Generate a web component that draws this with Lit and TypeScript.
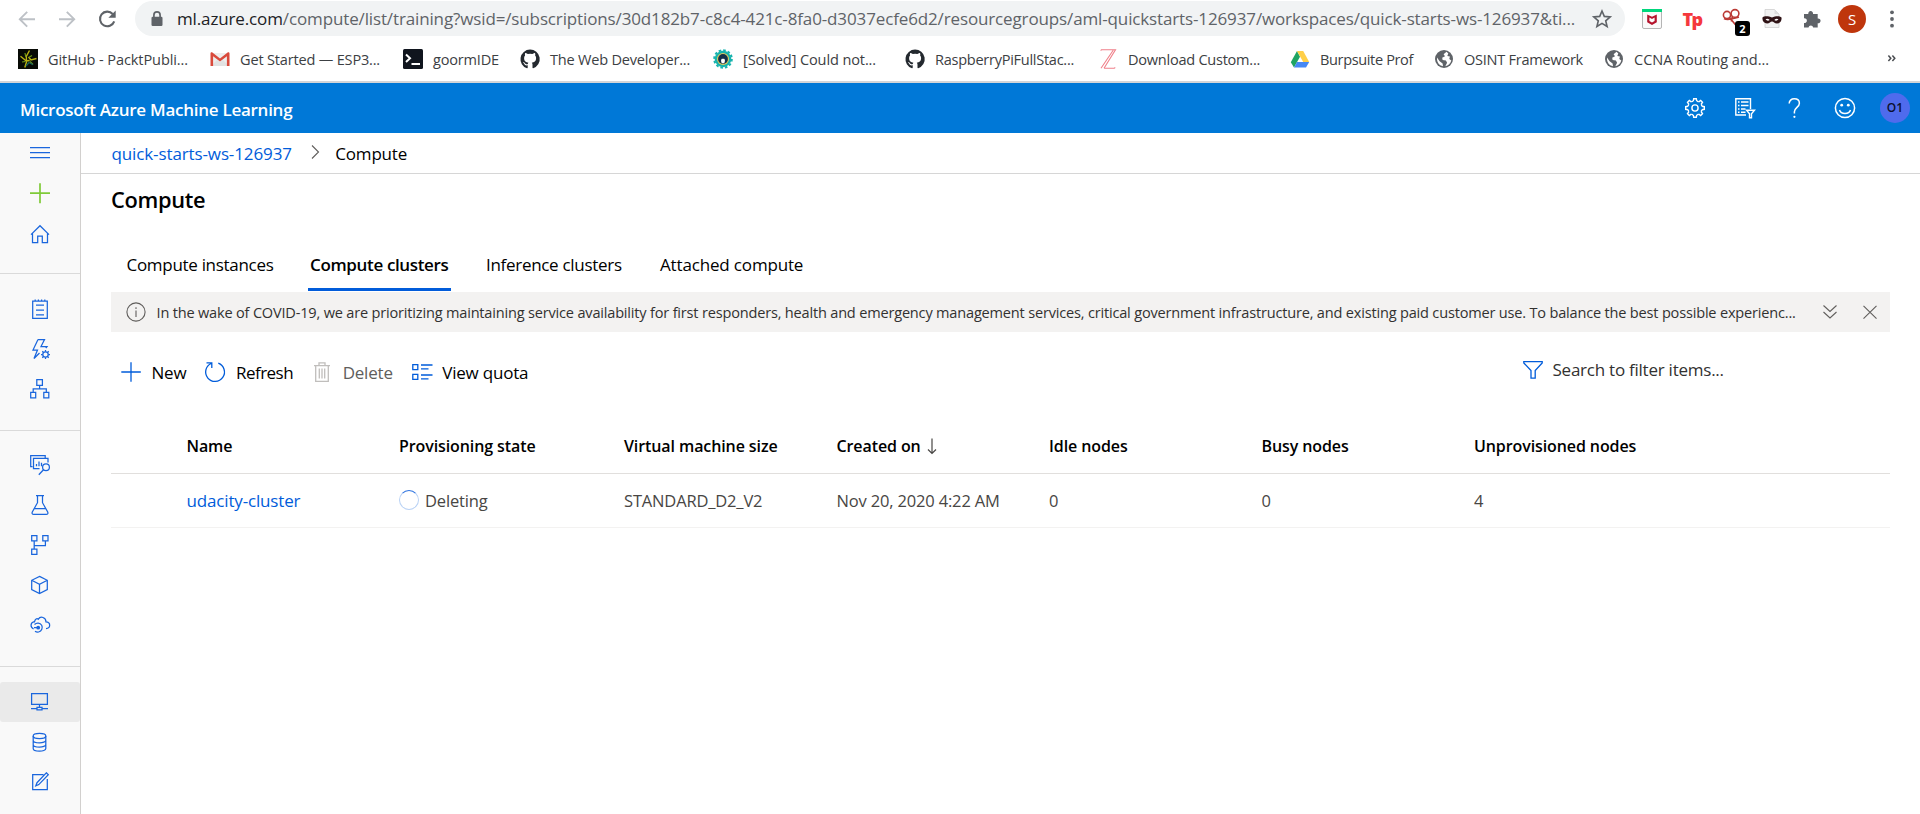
import { LitElement, html, svg, css, nothing } from 'lit';
import { customElement } from 'lit/decorators.js';
import { classMap } from 'lit/directives/class-map.js';
import { styleMap } from 'lit/directives/style-map.js';

type Bookmark = { icon: string; label: string; width: number; tracking: number };

const octocat = svg`<path fill="#24292f" d="M10 .6a9.600 9.600 0 0 0-3 18.700c.5.1.7-.2.7-.5v-2.500c-2.400.4-3-.6-3.200-1.100-.1-.3-.6-1.100-1-1.300-.3-.2-.8-.7 0-.7s1.300.7 1.500 1c.9 1.500 2.300 1.100 2.800.8.1-.6.4-1 .6-1.300-2.100-.2-4.300-1-4.300-4.600 0-1 .4-1.900 1-2.500-.1-.3-.4-1.200.1-2.500 0 0 .8-.3 2.600 1a9 9 0 0 1 4.600 0c1.800-1.200 2.600-1 2.600-1 .5 1.300.2 2.200.1 2.500.6.6 1 1.500 1 2.500 0 3.600-2.200 4.400-4.300 4.600.4.3.7.9.7 1.700v3.400c0 .3.200.6.7.5A9.600 9.600 0 0 0 10 .6z"/>`;

const globe = svg`<circle cx="10" cy="10" r="9" fill="#5f6368"/>
  <path fill="#fff" d="M12.500 2.800 9.600 5.200 11 7.200 8.200 8.800 8.600 11l3.300.6 1.200 2.200-1.800 3.400c3-.6 5.400-2.600 6-5.600l-2-1.600.6-2.600-2.600-.4 1-2.400zM3 8.600c-.4 3 .8 6 3.200 7.600L9 17.300l-.4-2.900-3-2.200z"/>`;

const favicons: Record<string, unknown> = {
  hub: svg`<rect width="20" height="20" fill="#080b06"/>
    <path fill="none" stroke="#b9b312" stroke-width="1.400" d="M11.500 1.500 8.300 7.500l.2 4M2.500 7.200 8.300 12l3.400-.5M6.800 18.500l1.800-5.800M18.500 9.500l-5.500 1.500-2.500-3"/>
    <path fill="none" stroke="#6d9a18" stroke-width="1.200" d="m7 4 .8 4M4 13l3.500-.5M15 15.500l-3-3M14 6.500 11 8.200"/>
    <path fill="none" stroke="#17605a" stroke-width="1.300" d="m8 17 3-3.500 4 2.200"/>`,
  gmail: svg`<path fill="#eeeeee" d="M1 4h18v13H1z"/><path fill="#dadada" d="m1 17 6-6 3 2.500L13 11l6 6z" opacity=".6"/>
    <path fill="#d94a3c" d="M.5 4.500C.5 3.500 1.600 3 2.400 3.600L10 9.500l7.600-5.900c.8-.6 1.900-.1 1.900.9V17h-2.600V7.200L10 12.500 3.100 7.200V17H.5z"/>`,
  goorm: svg`<rect width="20" height="20" rx="1.500" fill="#10151e"/>
    <path fill="none" stroke="#fff" stroke-width="2" d="m3 5.500 4 3.700-4 3.700M8.500 15H17"/>`,
  octocat,
  penguin: svg`<circle cx="10" cy="10" r="8.300" fill="#17b3ae"/>
    <circle cx="10" cy="10" r="8.800" fill="none" stroke="#17b3ae" stroke-width="2" stroke-dasharray="2.600 2"/>
    <circle cx="10" cy="10" r="6" fill="#e3c95a"/><circle cx="10" cy="10" r="4.900" fill="#14304a"/>
    <ellipse cx="10" cy="11.800" rx="2" ry="2.600" fill="#fff"/><circle cx="10" cy="8" r="1.800" fill="#14304a"/>`,
  zed: svg`<path fill="none" stroke="#f0808a" stroke-width="1.100" d="M3 .8h14.500L6 19.200M3 .8v1M15.200 1.200 3 19.200M6 19.200h10.800M16.800 19.200v-1"/>`,
  drive: svg`<path fill="#1fa463" d="M7 2 .8 13.200 4 18.500l6-10.800z"/><path fill="#ffcf48" d="M7 2h6.200l6 11h-6z"/>
    <path fill="#4688f4" d="M7 13h12.200L16 18.500H4z"/>`,
  globe,
};

const bookmarks: Bookmark[] = [
  { icon: 'hub', label: 'GitHub - PacktPubli...', width: 192, tracking: -0.007 },
  { icon: 'gmail', label: 'Get Started — ESP3...', width: 193, tracking: -0.0126 },
  { icon: 'goorm', label: 'goormIDE', width: 117, tracking: -0.013 },
  { icon: 'octocat', label: 'The Web Developer...', width: 193, tracking: -0.0145 },
  { icon: 'penguin', label: '[Solved] Could not...', width: 192, tracking: -0.0083 },
  { icon: 'octocat', label: 'RaspberryPiFullStac...', width: 193, tracking: -0.0188 },
  { icon: 'zed', label: 'Download Custom...', width: 192, tracking: -0.0174 },
  { icon: 'drive', label: 'Burpsuite Prof', width: 144, tracking: -0.0253 },
  { icon: 'globe', label: 'OSINT Framework', width: 170, tracking: -0.0178 },
  { icon: 'globe', label: 'CCNA Routing and...', width: 170, tracking: -0.0026 },
];

const glyph = (body: unknown, size = 20) =>
  html`<svg width=${size} height=${size} viewBox="0 0 20 20">${body}</svg>`;

@customElement('browser-chrome')
class BrowserChrome extends LitElement {
  static styles = css`
    :host { display: block; height: 83px; box-sizing: border-box; border-bottom: 2px solid #d3d5d8; background: #fff; font-family: 'Open Sans', sans-serif; }
    svg { display: block; flex: none; overflow: visible; }
    .toolbar { display: flex; align-items: center; height: 35px; padding: 1px 18px 1px 17px; }
    .nav { display: flex; gap: 20px; width: 118px; }
    .omnibox { display: flex; align-items: center; width: 1490px; height: 35px; box-sizing: border-box; padding: 0 13px 0 12px; border-radius: 17.5px; background: #f1f3f4; }
    .url { flex: 1; margin-left: 10px; white-space: nowrap; font-size: 17px; letter-spacing: -0.0078em; color: #5f6368; }
    .domain { color: #202124; }
    .extensions { display: flex; align-items: center; gap: 20px; flex: 1; padding-left: 17px; }
    .ext { display: flex; width: 20px; justify-content: center; position: relative; }
    .tp { font-weight: 800; font-size: 18px; line-height: 20px; letter-spacing: -0.09em; color: #f5383c; }
    .count { position: absolute; left: 13px; top: 12px; width: 15px; height: 15px; border-radius: 3px; background: #000; color: #fff; font-size: 11px; line-height: 15px; font-weight: 700; text-align: center; }
    .profile { flex: none; width: 28px; height: 28px; margin: 0 -4px; border-radius: 50%; background: #bf360c; color: #fff; text-align: center; font-size: 15px; line-height: 28px; }
    .bookmarks { display: flex; align-items: center; height: 44px; padding-left: 18px; }
    .bookmark { display: flex; align-items: center; gap: 10px; flex: none; font-size: 14.55px; color: #3c4043; white-space: nowrap; }
    .more { margin-left: auto; margin-right: 18px; }
  `;

  render() {
    return html`
      <div class="toolbar">
        <div class="nav">
          ${glyph(svg`<path fill="none" stroke="#bdc1c6" stroke-width="1.900" d="M18 10.200H3M10.200 2.800 2.800 10.200l7.400 7.400"/>`)}
          ${glyph(svg`<path fill="none" stroke="#bdc1c6" stroke-width="1.900" d="M2 10.200h15M9.800 2.800l7.400 7.400-7.400 7.400"/>`)}
          ${glyph(svg`<path fill="none" stroke="#5f6368" stroke-width="2.100" d="M17.200 12.300A7.300 7.300 0 1 1 15.700 5"/><path fill="#5f6368" d="M18.700 1.500v7.300h-7.300z"/>`)}
        </div>
        <div class="omnibox">
          ${glyph(svg`<rect x="4.500" y="7.700" width="11" height="9.300" rx="1.200" fill="#5f6368"/><path fill="none" stroke="#5f6368" stroke-width="1.700" d="M6.900 8V6a3.100 3.100 0 0 1 6.200 0v2"/>`)}
          <span class="url"><span class="domain">ml.azure.com</span>/compute/list/training?wsid=/subscriptions/30d182b7-c8c4-421c-8fa0-d3037ecfe6d2/resourcegroups/aml-quickstarts-126937/workspaces/quick-starts-ws-126937&amp;ti...</span>
          ${glyph(svg`<path fill="none" stroke="#5f6368" stroke-width="1.600" d="m10 2 2.300 5.400 5.900.5-4.500 3.900 1.400 5.700L10 14.400l-5.100 3.100 1.400-5.700-4.500-3.900 5.900-.5z"/>`)}
        </div>
        <div class="extensions">
          <span class="ext">${glyph(svg`<rect x=".5" y=".5" width="19" height="19" rx="1.500" fill="#fafafa" stroke="#b5b5b5"/><path fill="#00d67c" d="M0 0h20v3H0z"/><path fill="#b5122b" d="M5.200 5.400 10 7.700l4.800-2.300v7.800L10 15.900l-4.800-2.700zM7.400 8.600v3.300l2.600 1.500 2.600-1.500V8.600L10 9.900z"/>`)}</span>
          <span class="ext tp">Tp</span>
          <span class="ext">${glyph(svg`<g fill="none" stroke="#bb3a35" stroke-width="1.600"><circle cx="5" cy="6" r="3.600"/><circle cx="13" cy="4.500" r="3.900"/><path d="m7.500 8.500 7 8.500M10.300 7.500l-1 5M2 9.500c4 2.500 9 0 15-1.500"/></g>`)}<span class="count">2</span></span>
          <span class="ext">${glyph(svg`<path fill="#f1f1f1" stroke="#cfcfcf" stroke-width=".8" d="M3 .5h9.500L17 5v13.500H3z"/><path fill="#ddd" d="M12.500.5 17 5h-4.500z"/><path fill="#2f1215" d="M.5 8.500C3 6.500 7 7.500 10 8.500c3-1 7-2 9.500 0 .5 3.500-1.500 6-4.500 6-2.500 0-3.500-2-5-2s-2.500 2-5 2c-3 0-5-2.500-4.500-6z"/><path fill="#fff" d="M3.500 10.300q2.200-1.200 4.200.8-2.300 1.500-4.200-.8zM16.500 10.300q-2.200-1.200-4.200.8 2.300 1.500 4.200-.8z"/>`)}</span>
          <span class="ext">${glyph(svg`<path fill="#5f6368" d="M2 5h4.300a2.400 2.400 0 1 1 4.700 0h4.700v4.500a2.400 2.400 0 1 1 0 4.700v4.300h-4.500a2.400 2.400 0 0 0-4.700 0H2V14a2.400 2.400 0 1 0 0-4.700z"/>`)}</span>
          <span class="profile">S</span>
          <span class="ext">${glyph(svg`<g fill="#5f6368"><circle cx="10" cy="3.300" r="1.900"/><circle cx="10" cy="10" r="1.900"/><circle cx="10" cy="16.700" r="1.900"/></g>`)}</span>
        </div>
      </div>
      <div class="bookmarks">
        ${bookmarks.map(b => html`
          <span class="bookmark" style=${styleMap({ width: `${b.width}px`, letterSpacing: `${b.tracking}em` })}>${glyph(favicons[b.icon])}${b.label}</span>`)}
        <span class="more">${glyph(svg`<path fill="none" stroke="#4a4d51" stroke-width="1.900" d="m3 5.500 3 3.500-3 3.500M8 5.500 11 9l-3 3.500"/>`, 16)}</span>
      </div>`;
  }
}

@customElement('studio-header')
class StudioHeader extends LitElement {
  static styles = css`
    :host { display: flex; align-items: center; justify-content: space-between; height: 50px; box-sizing: border-box; padding: 0 10px 0 20px; background: #0078d7; color: #fff; font-family: 'Open Sans', sans-serif; }
    .title { padding-top: 2px; font-size: 17px; font-weight: 600; letter-spacing: -0.0155em; white-space: nowrap; }
    .actions { display: flex; align-items: center; gap: 30px; }
    svg { display: block; overflow: visible; }
    .avatar { width: 30px; height: 30px; margin-left: -5px; border-radius: 50%; background: #4f6bed; color: #0b1030; font-size: 12px; font-weight: 600; line-height: 30px; text-align: center; }
  `;

  render() {
    const teeth = Array.from({ length: 8 }, (_, i) => svg`<path d="M8.300 3 8.700.7h2.600l.4 2.300" transform="rotate(${i * 45} 10 10)"/>`);
    const arcs = Array.from({ length: 8 }, (_, i) => svg`<path d="M11.700 3q1 .2 2 1" transform="rotate(${i * 45} 10 10)"/>`);
    return html`
      <span class="title">Microsoft Azure Machine Learning</span>
      <div class="actions">
        ${glyph(svg`<g fill="none" stroke="#fff" stroke-width="1.400">${teeth}${arcs}<circle cx="10" cy="10" r="3.100"/></g>`)}
        ${glyph(svg`<g fill="none" stroke="#fff" stroke-width="1.400"><path d="M11 17H.8V.7h14.700V11"/><path d="M3 4h1.500M6 4h7.500M3 7.500h1.500M6 7.500h7.500M3 11h1.500M6 11h4.500M3 14.200h1.500M6 14.200h4.500"/><path d="M11.500 12.200h8l-3 3.600v3.900h-2v-3.900z"/></g>`)}
        ${glyph(svg`<path fill="none" stroke="#fff" stroke-width="1.500" d="M4.200 5.600C4.200 2.600 6.300.8 9.300.8s5.100 1.800 5.100 4.500c0 4-5 4.300-5 8.500v1.700"/><circle cx="9.400" cy="18.800" r="1.100" fill="#fff"/>`)}
        ${glyph(svg`<g fill="none" stroke="#fff" stroke-width="1.500"><circle cx="10" cy="10" r="9.600"/><path d="M4.500 12c1.500 4.500 9.500 4.500 11 0"/></g><circle cx="6.700" cy="7.200" r="1.400" fill="#fff"/><circle cx="13.300" cy="7.200" r="1.400" fill="#fff"/>`)}
        <span class="avatar">O1</span>
      </div>`;
  }
}

const gearSmall = svg`<circle cx="15.500" cy="15.500" r="2.700"/><path d="M15.500 11v1.700M15.500 18.300V20M11 15.500h1.700M18.300 15.500H20M12.300 12.300l1.200 1.200M17.500 17.500l1.200 1.200M18.700 12.300l-1.200 1.200M13.500 17.500l-1.200 1.200"/>`;

const railIcons: Record<string, unknown> = {
  menu: svg`<path d="M0 4.500h20M0 9.500h20M0 14.500h20"/>`,
  add: svg`<path stroke="#7fca38" stroke-width="1.700" d="M0 10.200h20M10 .2v20"/>`,
  home: svg`<path d="M1 10.600 10 1.700l9 8.900M2.500 9.300v9.200h5.200v-6.300h4.600v6.300h5.200V9.300"/>`,
  notebook: svg`<path d="M2.700 2h14.600v17.400H2.700zM5.200.5V2M8.400.5V2M11.600.5V2M14.800.5V2M6 6.200h8M6 11h8M6 15.800h8"/>`,
  automl: svg`<path d="M8 .6h6.500L11 7.500h6L15.800 9M8 .6 3 11h4.500L4 19.500 9.500 14"/>${gearSmall}`,
  designer: svg`<path d="M6.800.7h5.600v5.600H6.800zM.7 13.300h5v5.600h-5zM13.800 13.300h5v5.600h-5zM9.600 6.300v3.500M3.200 13.300V9.800h13.100v3.500"/>`,
  monitor: svg`<path d="M2.500 11.500H.7V.7h14.500v2M9.500 13.700H3.500V3.400H18v4M6.500 11.200V8.900M9 11.200V6.500M11.500 11.200V7.800"/><circle cx="16" cy="12.300" r="3.400"/><path d="m13.500 14.800-4.700 4.900"/>`,
  flask: svg`<path d="M6 .7h8M7.500.7v7L2.300 17q-.9 2.300 1.500 2.300h12.400q2.400 0 1.500-2.300L12.500 7.700v-7M4.300 13.700h11.400"/>`,
  pipeline: svg`<path d="M1.700.7h5.200v5.200H1.700zM12.800.7H18v5.200h-5.200zM1.700 14.200h5.200v5.200H1.700zM4.200 5.900v8.300M15.400 5.900v4.600H4.200"/>`,
  model: svg`<path d="m9.500 1.400 7.800 3.900v9.300l-7.800 4-7.800-4V5.300zM1.700 5.300l7.800 4 7.800-4M9.500 9.300v9.300"/>`,
  endpoint: svg`<path d="M3.600 13.800A3.700 3.700 0 0 1 3.500 6.800h1C5 3.800 7 3 8.300 4.200c2.300-3.600 7.700-1.800 7.700 2.700 5 .3 4.800 6.600 0 6.600M4.500 9.500c2-2 5.500-2 7.200.8 1.300 2.600 0 6-3 6.700-1.500.3-2.700 0-3.700-.7M4 12.700h3"/><circle cx="8.200" cy="12.700" r="1.900" fill="#1a66dd" stroke="none"/>`,
  compute: svg`<path d="M1.600 1.700h15.800v10.600H1.600zM9.500 12.300v3M7 15.300h5v2.500H7zM1 16.600h6M12 16.600h6"/>`,
  datastore: svg`<ellipse cx="9.500" cy="4" rx="6.300" ry="2.600"/><path d="M3.200 4v12.500c0 3.500 12.600 3.500 12.600 0V4M3.200 8.200c0 3.500 12.600 3.500 12.600 0M3.200 12.400c0 3.500 12.600 3.500 12.600 0"/>`,
  labeling: svg`<path d="M13.500 2.500H2.700v15h14.600V7M16.300.8l2 2-9.500 9.800-3 1.300 1.200-3.200z"/>`,
};

const railGroups: { name: string; items: string[] }[] = [
  { name: 'first', items: ['menu', 'add', 'home'] },
  { name: 'author', items: ['notebook', 'automl', 'designer'] },
  { name: 'assets', items: ['monitor', 'flask', 'pipeline', 'model', 'endpoint'] },
  { name: 'manage', items: ['compute', 'datastore', 'labeling'] },
];

@customElement('nav-rail')
class NavRail extends LitElement {
  static styles = css`
    :host { display: block; width: 81px; box-sizing: border-box; flex: none; border-right: 1px solid #d2d0ce; background: #f9f9f9; }
    .group { box-sizing: border-box; border-bottom: 1px solid #dadada; }
    .first { height: 141px; }
    .first .item { height: 40.6px; }
    .author { height: 157px; padding-top: 15px; }
    .assets { height: 236px; padding-top: 14.5px; }
    .manage { padding-top: 15px; border: 0; }
    .item { display: flex; align-items: center; justify-content: center; height: 40px; padding-bottom: 1px; box-sizing: border-box; border-radius: 3px; }
    .active { background: #eaeaea; }
    svg { display: block; overflow: visible; fill: none; stroke: #1a66dd; stroke-width: 1.25; }
  `;

  render() {
    return railGroups.map(g => html`
      <div class="group ${g.name}">
        ${g.items.map(i => html`<div class=${classMap({ item: true, active: i === 'compute' })}>${glyph(railIcons[i])}</div>`)}
      </div>`);
  }
}

const columns = ['', 'Name', 'Provisioning state', 'Virtual machine size', 'Created on', 'Idle nodes', 'Busy nodes', 'Unprovisioned nodes'];
const tabs = ['Compute instances', 'Compute clusters', 'Inference clusters', 'Attached compute'];

@customElement('compute-page')
class ComputePage extends LitElement {
  static styles = css`
    :host { display: block; flex: 1; min-width: 0; background: #fff; font-family: 'Open Sans', sans-serif; font-size: 17px; letter-spacing: -0.012em; color: #000; }
    svg { display: block; flex: none; overflow: visible; fill: none; stroke: #015cda; stroke-width: 1.3; }
    .crumbs { display: flex; align-items: center; height: 40px; padding-left: 30.5px; border-bottom: 1px solid #d6d6d6; }
    .crumbs svg { margin: 0 10.5px 3px 13px; stroke: #605e5c; stroke-width: 1.1; }
    .link { color: #015cda; }
    .crumbs .link { letter-spacing: -0.0069em; }
    .body { padding: 0 30px; }
    h1 { margin: 0; font-size: 21.8px; line-height: 51px; font-weight: 600; letter-spacing: -0.0149em; }
    .tabs { display: grid; grid-template-columns: 183.5px 176px 174px auto; height: 50px; margin: 16px 0 0 13px; }
    .tab { justify-self: start; box-sizing: border-box; height: 50px; padding: 0 2.5px; border-bottom: 3px solid transparent; line-height: 47px; letter-spacing: -0.0176em; white-space: nowrap; }
    .tab:last-child { letter-spacing: -0.0093em; }
    .selected { font-weight: 600; letter-spacing: -0.0206em; border-color: #015cda; }
    .banner { display: flex; align-items: center; height: 40px; margin-top: 1px; padding: 0 10px 0 15px; background: #f3f2f1; color: #323130; font-size: 14.55px; letter-spacing: -0.0128em; }
    .banner svg { stroke: #605e5c; stroke-width: 1.1; margin-bottom: 1px; }
    .message { flex: 1; padding-left: 10.5px; white-space: nowrap; }
    .banner .dismiss { margin-left: 20px; }
    .bar { display: flex; justify-content: space-between; height: 40px; margin-top: 20px; }
    .commands, .command, .filter { display: flex; align-items: center; }
    .commands { padding-left: 10px; gap: 19px; }
    .command { gap: 10.5px; white-space: nowrap; }
    .refresh { letter-spacing: -0.03em; }
    .disabled { color: #605e5c; }
    .disabled svg { stroke: #c0bebc; }
    .filter { gap: 10px; height: 35px; width: 367.5px; color: #323130; letter-spacing: -0.0142em; }
    .row { display: grid; grid-template-columns: 75.5px 212.5px 225px 212.5px 212.5px 212.5px 212.5px 1fr; align-items: center; box-sizing: border-box; white-space: nowrap; }
    .head { height: 56px; margin-top: 26px; border-bottom: 1px solid #e1dfdd; font-size: 16px; font-weight: 600; letter-spacing: -0.006em; }
    .record { height: 54px; border-bottom: 1px solid #f3f2f1; font-size: 16.5px; letter-spacing: -0.01em; color: #484644; }
    .record .link { font-size: 17px; color: #015cda; }
    .cell { display: flex; align-items: center; gap: 5px; }
    .cell .sort { margin-left: -2px; stroke: #484644; stroke-width: 1.2; }
    .spinner { width: 18px; height: 18px; border: 1.5px solid #b9d2f5; border-top-color: #2f74e0; border-radius: 50%; margin: -2px 1px 0 0; }
  `;

  render() {
    return html`
      <div class="crumbs">
        <span class="link">quick-starts-ws-126937</span>
        ${glyph(svg`<path d="m7 3.500 6.500 6.500L7 16.500"/>`, 20)}
        <span>Compute</span>
      </div>
      <div class="body">
        <h1>Compute</h1>
        <div class="tabs">
          ${tabs.map(t => html`<span class=${classMap({ tab: true, selected: t === 'Compute clusters' })}>${t}</span>`)}
        </div>
        <div class="banner">
          ${glyph(svg`<circle cx="10" cy="10" r="9.100"/><path d="M10 8.500V15M10 5.300v1.700"/>`)}
          <span class="message">In the wake of COVID-19, we are prioritizing maintaining service availability for first responders, health and emergency management services, critical government infrastructure, and existing paid customer use. To balance the best possible experienc...</span>
          ${glyph(svg`<path d="m3.500 3.500 6.500 6 6.500-6M3.500 10l6.500 6 6.500-6"/>`)}
          <span class="dismiss">${glyph(svg`<path d="m3.500 3.800 13 12.900M16.500 3.800l-13 12.900"/>`, 20)}</span>
        </div>
        <div class="bar">
          <div class="commands">
            <span class="command">${glyph(svg`<path d="M.3 10h19.500M10 .2v19.600"/>`)}New</span>
            <span class="command refresh">${glyph(svg`<path d="M13.300 1.200a9.400 9.400 0 1 1-7.200.3M1.500.8h5.300v5.300"/>`)}Refresh</span>
            <span class="command disabled">${glyph(svg`<path d="M2 3.600h16M7 3.600V.9h6v2.700M3.700 3.600v15.700h12.600V3.600M7.300 6.500v10M10 6.500v10M12.700 6.500v10"/>`)}Delete</span>
            <span class="command">${glyph(svg`<path d="M.8 2.700h5v5h-5zM.8 12.300h5v5h-5zM9 3h11.500M9 6.800h7.500M9 13h11.500M9 16.800h7.500"/>`)}View quota</span>
          </div>
          <div class="filter">${glyph(svg`<path d="M.8 1.600h18.400v1.300l-7 7.600v7.700H8v-7.700L.8 2.900z"/>`)}Search to filter items...</div>
        </div>
        <div class="row head">
          ${columns.map(c => html`<span class="cell">${c}${c === 'Created on' ? html`<svg class="sort" width="16" height="16" viewBox="0 0 16 16"><path d="M8 .5v15M4 11.500l4 4 4-4"/></svg>` : nothing}</span>`)}
        </div>
        <div class="row record">
          <span></span>
          <span class="cell link">udacity-cluster</span>
          <span class="cell"><span class="spinner"></span>Deleting</span>
          <span class="cell">STANDARD_D2_V2</span>
          <span class="cell">Nov 20, 2020 4:22 AM</span>
          <span class="cell">0</span>
          <span class="cell">0</span>
          <span class="cell">4</span>
        </div>
      </div>`;
  }
}

@customElement('app-root')
class AppRoot extends LitElement {
  static styles = css`
    :host { display: flex; flex-direction: column; width: 100%; height: 814px; overflow: hidden; background: #fff; }
    .workspace { display: flex; flex: 1; min-height: 0; overflow: hidden; }
  `;

  render() {
    return html`
      <browser-chrome></browser-chrome>
      <studio-header></studio-header>
      <div class="workspace">
        <nav-rail></nav-rail>
        <compute-page></compute-page>
      </div>`;
  }
}
